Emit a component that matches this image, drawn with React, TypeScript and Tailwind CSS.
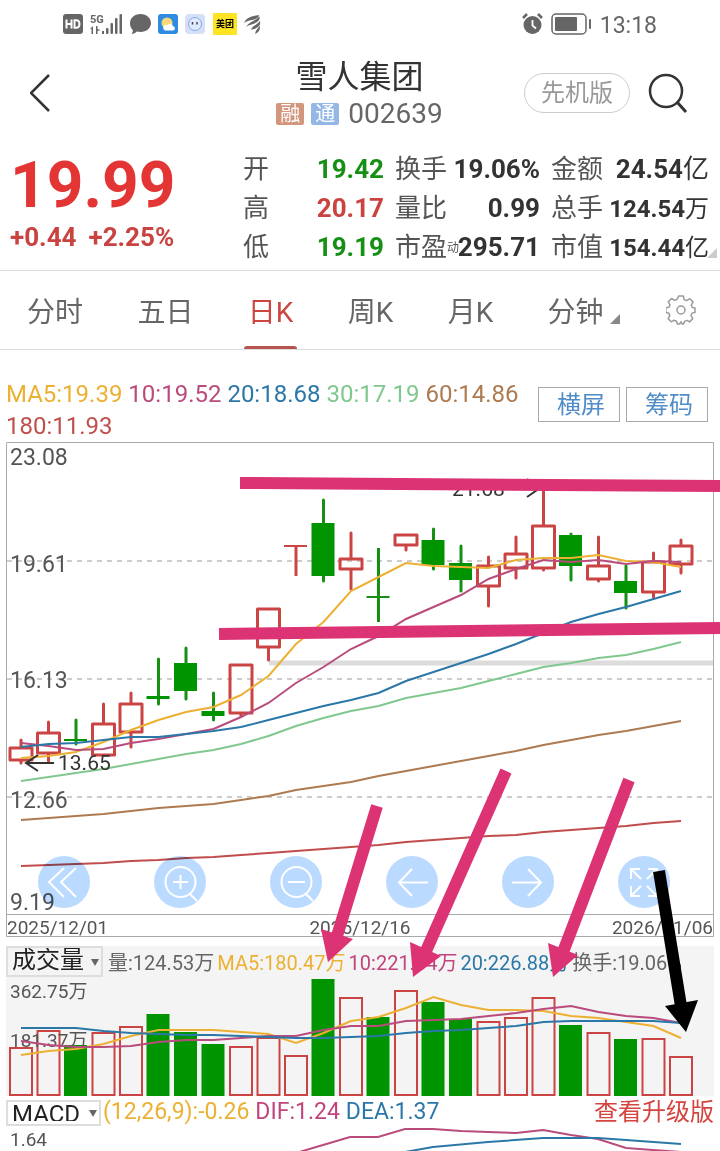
import React from 'react';

type Candle = {
  up: boolean;
  top: number;
  bottom: number;
  high: number;
  low: number;
};

const FIRST_X = 21;
const STEP = 27.5;
const VOLUME_BASE = 1095;

const xAt = (index: number) => FIRST_X + index * STEP;

const candles: Candle[] = [
  { up: true, top: 747, bottom: 761, high: 739, low: 764 },
  { up: true, top: 732, bottom: 754, high: 721, low: 762 },
  { up: false, top: 739, bottom: 741, high: 719, low: 745 },
  { up: true, top: 723, bottom: 756, high: 703, low: 756 },
  { up: true, top: 703, bottom: 733, high: 692, low: 748 },
  { up: false, top: 696, bottom: 699, high: 658, low: 705 },
  { up: false, top: 663, bottom: 691, high: 647, low: 700 },
  { up: false, top: 711, bottom: 716, high: 692, low: 721 },
  { up: true, top: 664, bottom: 714, high: 664, low: 717 },
  { up: true, top: 608, bottom: 648, high: 608, low: 661 },
  { up: true, top: 546, bottom: 547, high: 546, low: 576 },
  { up: false, top: 523, bottom: 576, high: 499, low: 582 },
  { up: true, top: 558, bottom: 570, high: 532, low: 590 },
  { up: false, top: 597, bottom: 598, high: 548, low: 622 },
  { up: true, top: 534, bottom: 546, high: 534, low: 551 },
  { up: false, top: 540, bottom: 565, high: 528, low: 570 },
  { up: false, top: 563, bottom: 580, high: 545, low: 592 },
  { up: true, top: 565, bottom: 587, high: 556, low: 607 },
  { up: true, top: 553, bottom: 569, high: 536, low: 579 },
  { up: true, top: 525, bottom: 569, high: 488, low: 571 },
  { up: false, top: 535, bottom: 566, high: 533, low: 581 },
  { up: true, top: 565, bottom: 580, high: 536, low: 582 },
  { up: false, top: 581, bottom: 593, high: 565, low: 609 },
  { up: true, top: 561, bottom: 593, high: 552, low: 598 },
  { up: true, top: 545, bottom: 565, high: 539, low: 574 },
];

const volumeTops = [
  1047, 1030, 1045, 1032, 1026, 1014, 1032, 1044, 1046, 1037, 1055, 979, 997, 1017, 990, 1002, 1019, 1021, 1017, 997,
  1025, 1032, 1039, 1038, 1056,
];

const priceLines = [
  {
    color: '#ecb032',
    points: [758, 756, 752, 742, 730, 720, 712, 707, 695, 676, 644, 622, 591, 577, 563, 566, 567, 568, 560, 558, 558, 555, 561, 562, 567],
  },
  {
    color: '#b94b7d',
    points: [743, 746, 750, 749, 743, 739, 734, 729, 717, 703, 683, 667, 649, 636, 619, 607, 595, 579, 569, 560, 562, 560, 564, 561, 562],
  },
  {
    color: '#2b78a8',
    points: [747, 744, 743, 740, 737, 737, 734, 731, 727, 720, 713, 706, 700, 693, 681, 672, 663, 654, 644, 633, 622, 614, 607, 599, 591],
  },
  {
    color: '#80c88e',
    points: [781, 777, 773, 769, 764, 759, 754, 750, 744, 736, 726, 718, 711, 706, 698, 693, 688, 681, 674, 667, 663, 658, 655, 649, 642],
  },
  {
    color: '#ae7a50',
    points: [820, 818, 816, 814, 811, 808, 806, 804, 800, 796, 790, 786, 782, 776, 771, 766, 761, 756, 751, 745, 740, 735, 731, 726, 721],
  },
  {
    color: '#c04c4c',
    points: [866, 865, 864, 863, 861, 860, 858, 857, 855, 853, 851, 849, 847, 845, 842, 840, 838, 836, 835, 832, 830, 828, 826, 823, 821],
  },
];

const volumeLines = [
  {
    color: '#ecb032',
    points: [1055, 1051, 1049, 1044, 1036, 1030, 1030, 1030, 1032, 1034, 1043, 1033, 1021, 1017, 1008, 997, 1005, 1010, 1010, 1011, 1016, 1018, 1022, 1026, 1038],
  },
  {
    color: '#b94b7d',
    points: [1041, 1045, 1047, 1047, 1046, 1042, 1040, 1040, 1038, 1036, 1036, 1030, 1026, 1026, 1021, 1020, 1019, 1016, 1013, 1009, 1006, 1012, 1016, 1018, 1023],
  },
  {
    color: '#2b78a8',
    points: [1028, 1028, 1028, 1031, 1033, 1034, 1035, 1035, 1036, 1037, 1038, 1038, 1037, 1036, 1033, 1031, 1030, 1028, 1026, 1022, 1021, 1021, 1021, 1021, 1023],
  },
];

const toPoints = (values: number[]) => values.map((y, i) => `${xAt(i)},${y}`).join(' ');

const StatusBar: React.FC = () => (
  <div className="flex h-12 items-center justify-between pl-[63px] pr-[63px] text-[#666]">
    <div className="flex items-center gap-[7px]">
      <svg width="20" height="20" viewBox="0 0 20 20">
        <rect width="20" height="20" rx="3" fill="#666" />
        <path d="M3.500 5.500v9M8.500 5.500v9M3.500 10h5M11.500 6.200v7.600h1.800c4.200 0 4.200-7.600 0-7.600z" fill="none" stroke="#fff" strokeWidth="2" />
      </svg>
      <svg width="33" height="22" viewBox="0 0 33 22" fill="#666">
        <text x="0" y="10" fontSize="11" fontWeight="700" fontFamily="Roboto, sans-serif">5G</text>
        <path d="M0 16l3-3v8H1.500v-5zM6 13h1.500v3l3 1-3 1v3H6z" />
        <rect x="12" y="18" width="2" height="3" />
        <rect x="16" y="15" width="2.500" height="6" rx="1" />
        <rect x="20.500" y="10" width="2.500" height="11" rx="1" />
        <rect x="25" y="5" width="2.500" height="16" rx="1" />
        <rect x="29.500" y="1" width="2.500" height="20" rx="1" />
      </svg>
      <svg width="21" height="20" viewBox="0 0 21 20">
        <path d="M10.500 0C16.500 0 21 4 21 9s-4.500 9-10.500 9c-1.500 0-2.500-.2-3.500-.5C5.500 19 3.500 20 1.500 20c1-1.200 1.500-2.500 1.300-4C1 14.500 0 12 0 9c0-5 4.500-9 10.500-9z" fill="#666" />
      </svg>
      <svg width="20" height="20" viewBox="0 0 20 20">
        <rect width="20" height="20" rx="3" fill="#2e8be0" />
        <circle cx="9" cy="9" r="5.500" fill="#f8d878" />
        <path d="M7 16.500a3 3 0 010-5.500c1-.2 1.500.2 2 .5 1-2.500 5.500-2.500 6 .8 2.500.4 2.500 4.200 0 4.200z" fill="#fff" />
      </svg>
      <svg width="21" height="20" viewBox="0 0 21 20">
        <rect width="20" height="20" rx="4" fill="#d4e0f8" />
        <circle cx="10" cy="10" r="6.500" fill="#dfe9ff" stroke="#8aa8e8" />
        <path d="M7.500 8v2.500M12 8v2.500" stroke="#445" strokeWidth="1.500" />
      </svg>
      <span className="flex h-[22px] w-6 items-center justify-center bg-[#ffe425] text-[9px] font-bold leading-none text-black">
        美团
      </span>
      <svg width="17" height="19" viewBox="0 0 17 19" fill="#666">
        <path d="M0 8C2 3 7 1 15 0c0 3-3 4-7 5-4 .8-6 1.500-8 3z" />
        <path d="M2 12C5 7 11 6 15.500 1.500c1 4-2.500 6-6.500 7.500-3 1-5 1.500-7 3z" />
        <path d="M7 15c1-4 6-5 9-9 1 5-2 6-4.500 7.500C9.500 14.500 8 14 7 15z" />
        <path d="M11 19c1-4 2-5 5-8 0 4-1 6-5 8z" />
      </svg>
    </div>
    <div className="flex items-center gap-2">
      <svg width="21" height="22" viewBox="0 0 21 22">
        <circle cx="10.500" cy="12" r="9" fill="#666" />
        <path d="M1 5l4-4M20 5l-4-4" stroke="#666" strokeWidth="2.500" />
        <path d="M10.500 7v5.500l3.500 3" fill="none" stroke="#fff" strokeWidth="1.800" />
      </svg>
      <svg width="41" height="22" viewBox="0 0 41 22">
        <rect x="1" y="1" width="34" height="20" rx="4" fill="none" stroke="#666" strokeWidth="1.500" />
        <rect x="4" y="4" width="22" height="14" rx="1" fill="#666" />
        <rect x="38" y="6" width="2" height="10" rx="1" fill="#666" />
      </svg>
      <span className="pt-[2px] text-[23px] leading-none">13:18</span>
    </div>
  </div>
);

const Header: React.FC = () => (
  <header className="grid h-[92px] grid-cols-[1fr_auto_1fr] items-center pl-[30px] pr-[31px]">
    <button type="button" aria-label="返回" className="w-6 pb-[2px]">
      <svg width="24" height="40" viewBox="0 0 24 40" fill="none" stroke="#333" strokeWidth="2.500">
        <path d="M19 2L1 20l18 18" />
      </svg>
    </button>
    <div className="flex flex-col items-center">
      <h1 className="text-[32px] leading-[40px] text-[#333]">雪人集团</h1>
      <div className="flex items-center gap-[7px]">
        <span className="flex h-[22px] w-7 items-center justify-center rounded-[2px] bg-[#d2967c] text-[20px] leading-none text-white">融</span>
        <span className="flex h-[22px] w-7 items-center justify-center rounded-[2px] bg-[#94b8e6] text-[20px] leading-none text-white">通</span>
        <span className="pl-[2px] text-[28px] leading-[34px] text-[#666]">002639</span>
      </div>
    </div>
    <div className="flex items-center justify-end gap-[18px] pb-[3px]">
      <button type="button" className="h-10 whitespace-nowrap rounded-full border border-[#ccc] px-4 text-[24px] leading-none text-[#999]">
        先机版
      </button>
      <button type="button" aria-label="搜索">
        <svg width="41" height="42" viewBox="0 0 41 42" fill="none" stroke="#333" strokeWidth="2.500">
          <circle cx="18" cy="19" r="16" />
          <path d="M29 30l9 10" strokeWidth="3" />
        </svg>
      </button>
    </div>
  </header>
);

type StatProps = { label: string; note?: string; value: string; unit?: string; tone?: string; size?: string };

const Stat: React.FC<StatProps> = ({ label, note, value, unit, tone = 'text-[#333]', size = 'text-[26px]' }) => (
  <div className="flex h-[39px] items-center justify-between whitespace-nowrap">
    <dt className="flex items-center text-[26px] text-[#555]">
      {label}
      {note && <small className="-mr-1 text-[12px]">{note}</small>}
    </dt>
    <dd className={`${size} ${tone} font-bold`}>
      {value}
      {unit && <span className="font-normal">{unit}</span>}
    </dd>
  </div>
);

const Quote: React.FC = () => (
  <section className="flex h-[131px] border-b border-[#ddd] pl-[10px] pr-[11px] pt-[10px]">
    <div className="w-[233px] shrink-0 text-[#e23534]">
      <p className="text-[64px] font-bold leading-[72px]">19.99</p>
      <p className="flex gap-3 text-[26px] font-bold leading-[30px] text-[#c94340]">
        <span>+0.44</span>
        <span>+2.25%</span>
      </p>
    </div>
    <dl className="relative grid grow grid-cols-[141fr_145fr_158fr] content-start gap-x-[11px]">
      <Stat label="开" value="19.42" tone="text-[#159015]" />
      <Stat label="换手" value="19.06%" />
      <Stat label="金额" value="24.54" unit="亿" />
      <Stat label="高" value="20.17" tone="text-[#c94340]" />
      <Stat label="量比" value="0.99" />
      <Stat label="总手" value="124.54" unit="万" size="text-[24px]" />
      <Stat label="低" value="19.19" tone="text-[#159015]" />
      <Stat label="市盈" note="动" value="295.71" />
      <Stat label="市值" value="154.44" unit="亿" size="text-[24px]" />
      <svg className="absolute -right-2 bottom-3" width="10" height="10" viewBox="0 0 10 10" fill="#ccc">
        <path d="M10 0v10H0z" />
      </svg>
    </dl>
  </section>
);

const tabs = ['分时', '五日', '日K', '周K', '月K'];

const PeriodTabs: React.FC = () => (
  <nav className="flex h-[79px] items-stretch justify-between border-b border-[#ddd] pl-[27px] pr-6 text-[28px] text-[#666]">
    {tabs.map((tab) => (
      <button key={tab} type="button" className={tab === '日K' ? 'relative pt-[6px] text-[#cc4541]' : 'pt-[6px]'}>
        {tab}
        {tab === '日K' && <span className="absolute -inset-x-1 bottom-0 h-[3px] rounded-t bg-[#b85450]" />}
      </button>
    ))}
    <button type="button" className="flex items-center gap-[6px] pt-[6px]">
      分钟
      <svg className="mt-3" width="10" height="10" viewBox="0 0 10 10" fill="#888">
        <path d="M10 0v10H0z" />
      </svg>
    </button>
    <button type="button" aria-label="设置" className="-ml-2">
      <svg width="30" height="30" viewBox="0 0 30 30" fill="none" stroke="#999" strokeWidth="1.500" strokeLinejoin="round">
        <path d="M12.700 1h4.600l.9 3.600 2.300 1 3.300-1.900 3.200 3.200-1.700 3.200 1 2.400 2.700.6v4.300l-3 .8-1 2.300 1.700 3.200-3.200 3.200-2.400-1.500-2.600 1-.9 2.600h-1.200l-1.400-2.200-1.400 2.200h-2.200l-.9-2.800-2.400-1-3 1.600-2.900-3.100 1.600-3.100-1-2.500-3-.8v-4.400l3.200-.7 1-2.300-1.700-3.200 3.200-3.200 3.300 1.900 2.200-1z" />
        <circle cx="15" cy="15" r="4" />
      </svg>
    </button>
  </nav>
);

const AverageLegend: React.FC = () => (
  <div className="flex h-[92px] items-start justify-between pl-[6px] pr-3 pt-[28px]">
    <p className="w-[524px] text-[24px] leading-8">
      <span className="text-[#ecb032]">MA5:19.39</span> <span className="text-[#b94b7d]">10:19.52</span>{' '}
      <span className="text-[#2b78a8]">20:18.68</span> <span className="text-[#80c88e]">30:17.19</span>{' '}
      <span className="text-[#ae7a50]">60:14.86</span> <span className="text-[#c0504c]">180:11.93</span>
    </p>
    <div className="flex gap-[6px] pt-[9px] text-[24px] leading-none text-[#4f8cc8]">
      <button type="button" className="h-[35px] w-[82px] whitespace-nowrap border border-[#aaa] pl-1">横屏</button>
      <button type="button" className="h-[35px] w-[82px] whitespace-nowrap border border-[#aaa] pl-1">筹码</button>
    </div>
  </div>
);

const chartTools = [
  { name: '后退', icon: <path d="M26 12L11 26l15 15M38 12L23 26l15 15" /> },
  { name: '放大', icon: <path d="M41.500 26a15 15 0 10-30 0 15 15 0 1030 0M35 37l8 8M26.500 19v14M19 26h15" /> },
  { name: '缩小', icon: <path d="M41.500 26a15 15 0 10-30 0 15 15 0 1030 0M35 37l8 8M18 26h17" /> },
  { name: '左移', icon: <path d="M42 26.500H13M26 13L13 26.500 26 40" /> },
  { name: '右移', icon: <path d="M10 26.500h29M26 13l13 13.500L26 40" /> },
  { name: '全屏', icon: <path d="M22 13h-9v10M13 13l10 10M30 13h9v10M39 13L29 23M22 40h-9V30M13 40l10-10M30 40h9V30M39 40L29 30" /> },
];

const CandleMark: React.FC<{ candle: Candle; x: number }> = ({ candle, x }) => {
  const { up, top, bottom, high, low } = candle;
  const color = up ? '#c94442' : '#159015';
  if (bottom - top < 2) {
    return (
      <g stroke={color}>
        <path d={`M${x - 12} ${top}h23`} strokeWidth="2" />
        <path d={`M${x} ${high}V${low}`} strokeWidth="3" />
      </g>
    );
  }
  return (
    <g stroke={color} strokeWidth="3" strokeLinecap="round">
      {high < top && <path d={`M${x} ${high + 1}V${top}`} />}
      {low > bottom && <path d={`M${x} ${bottom}V${low - 1}`} />}
      {up ? (
        <rect x={x - 11} y={top + 1} width="22" height={bottom - top - 2} fill="none" strokeLinejoin="round" />
      ) : (
        <rect x={x - 12} y={top} width="23" height={bottom - top} fill="#009500" stroke="none" />
      )}
    </g>
  );
};

const PriceChart: React.FC = () => (
  <section className="relative mx-[6px]">
    <svg className="block h-auto w-full" viewBox="6 442 708 504" fill="none">
      <path d="M7 442.500h706.500v494H6.500v-494M6.500 914.500h707" stroke="#aaa" />
      {[561, 679, 797].map((y) => (
        <path key={y} d={`M7 ${y}h706`} stroke="#ccc" strokeWidth="2" strokeDasharray="5 5" />
      ))}
      <path d="M269 663h444" stroke="#dcdcdc" strokeWidth="5" />
      {candles.map((candle, i) => (
        <CandleMark key={i} candle={candle} x={xAt(i)} />
      ))}
      {priceLines.map((line) => (
        <polyline key={line.color} points={toPoints(line.points)} stroke={line.color} strokeWidth="2" />
      ))}
      <g fill="#555" fontSize="23">
        <text x="10" y="465">23.08</text>
        <text x="10" y="572">19.61</text>
        <text x="10" y="688">16.13</text>
        <text x="10" y="808">12.66</text>
        <text x="10" y="910">9.19</text>
      </g>
      <g fill="#333" fontSize="21">
        <text x="58" y="770">13.65</text>
        <text x="452" y="496">21.68</text>
      </g>
      <path d="M54 763H27M38 755l-12 8 12 8M512 488h28M527 497l13-9-13-9" stroke="#333" strokeWidth="2" />
      <g fill="#555" fontSize="19">
        <text x="7" y="934">2025/12/01</text>
        <text x="360" y="934" textAnchor="middle">2025/12/16</text>
        <text x="713" y="934" textAnchor="end">2026/01/06</text>
      </g>
    </svg>
    <div className="absolute bottom-[38px] left-8 right-11 flex justify-between mix-blend-multiply">
      {chartTools.map((tool) => (
        <button key={tool.name} type="button" aria-label={tool.name} className="rounded-full bg-[#bbdaff]">
          <svg width="52" height="52" viewBox="0 0 52 52" fill="none" stroke="#fff" strokeWidth="2">
            {tool.icon}
          </svg>
        </button>
      ))}
    </div>
  </section>
);

const IndicatorSelect: React.FC<{ label: string; options: string[]; width: string }> = ({ label, options, width }) => (
  <div className={`relative shrink-0 ${width}`}>
    <select aria-label={label} className="block h-full w-full appearance-none border-2 border-[#ddd] bg-transparent pb-[3px] pl-1 text-[24px] leading-none text-[#222]">
      {options.map((option) => (
        <option key={option}>{option}</option>
      ))}
    </select>
    <svg className="pointer-events-none absolute right-1 top-1/2 -mt-[3px]" width="8" height="7" viewBox="0 0 8 7" fill="#666">
      <path d="M0 0h8L4 7z" />
    </svg>
  </div>
);

const VolumeChart: React.FC = () => (
  <section className="mx-[6px] bg-[#f4f4f4]">
    <div className="flex h-[31px] gap-[3px] whitespace-nowrap text-[20px] leading-[34px] text-[#666]">
      <IndicatorSelect label="副图指标" options={['成交量', '成交额']} width="w-[97px]" />
      <span className="pl-[2px]">量:124.53万</span>
      <span className="text-[#ecb032]">MA5:180.47万</span>
      <span className="text-[#c2447d]">10:221.64万</span>
      <span className="text-[#2b78a8]">20:226.88万</span>
      <span>换手:19.06%</span>
    </div>
    <svg className="block h-auto w-full" viewBox="6 977 708 119" fill="none">
      {candles.map(({ up }, i) => {
        const top = volumeTops[i];
        return up ? (
          <rect key={i} x={xAt(i) - 11} y={top + 1} width="22" height={VOLUME_BASE - top - 1} stroke="#c94442" strokeWidth="2" />
        ) : (
          <rect key={i} x={xAt(i) - 12} y={top} width="23" height={VOLUME_BASE - top + 1} fill="#009500" />
        );
      })}
      <g fill="#555" fontSize="19">
        <text x="10" y="998">362.75万</text>
        <text x="10" y="1047">181.37万</text>
      </g>
      {volumeLines.map((line) => (
        <polyline key={line.color} points={toPoints(line.points)} stroke={line.color} strokeWidth="2" />
      ))}
    </svg>
  </section>
);

const MacdChart: React.FC = () => (
  <section className="mx-[6px] mt-1">
    <div className="flex h-[26px] gap-[6px] whitespace-nowrap text-[23px] leading-[24px]">
      <IndicatorSelect label="指标" options={['MACD', 'KDJ']} width="w-[95px]" />
      <span className="-ml-1 text-[#ecb032]">(12,26,9):-0.26</span>
      <span className="text-[#c2447d]">DIF:1.24</span>
      <span className="text-[#2b78a8]">DEA:1.37</span>
      <a href="#upgrade" className="ml-auto text-[24px] text-[#d4453f]">查看升级版</a>
    </div>
    <svg className="block h-auto w-full" viewBox="6 1126 708 25" fill="none" strokeWidth="2">
      <text x="10" y="1146" fill="#555" fontSize="19">1.64</text>
      <polyline
        points="296,1153 323,1145 350,1137 378,1137 405,1129 433,1129 461,1131 488,1132 516,1133 543,1130 571,1135 598,1139 626,1148 653,1150 681,1152"
        stroke="#b94b7d"
      />
      <polyline points="405,1152 433,1147 488,1142 543,1138 598,1138 626,1140 681,1144" stroke="#2b78a8" />
    </svg>
  </section>
);

// Hand-drawn marks that sit over the charts
const Annotations: React.FC = () => (
  <svg className="pointer-events-none absolute left-0 top-0 h-auto w-full" viewBox="0 0 720 1151" strokeWidth="12">
    <g stroke="#dc3374" fill="#dc3374">
      <path d="M240 483l480 3M219 634l501-6" />
      <path d="M377 806l-40 130M506 771l-80 180M629 780l-66 172" />
      <path d="M321 929l32 10-25 23zM410 942l31 14-28 21zM548 943l30 12-25 22z" stroke="none" />
    </g>
    <path d="M659 871l22 135" stroke="#000" />
    <path d="M665 1006l33-6-12 32z" />
  </svg>
);

const App: React.FC = () => {
  return (
    <main className="relative w-full overflow-hidden bg-white font-['Roboto','Noto_Sans_CJK_SC',sans-serif]">
      <StatusBar />
      <Header />
      <Quote />
      <PeriodTabs />
      <AverageLegend />
      <PriceChart />
      <VolumeChart />
      <MacdChart />
      <Annotations />
    </main>
  );
};

export default App;
